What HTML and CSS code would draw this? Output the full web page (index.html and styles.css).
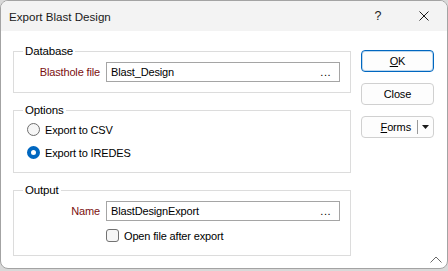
FILE: index.html
```html
<!DOCTYPE html>
<html>
<head>
<meta charset="utf-8">
<link rel="stylesheet" href="styles.css">
</head>
<body>
<div class="window">
  <div class="titlebar">
    <span class="title">Export Blast Design</span>
    <span class="tb-btn help">?</span>
    <span class="tb-btn close">
      <svg width="10" height="10" viewBox="0 0 10 10"><path d="M0.5 0.5 L9.5 9.5 M9.5 0.5 L0.5 9.5" stroke="#1a1a1a" stroke-width="1" fill="none"/></svg>
    </span>
  </div>
  <div class="content">
    <div class="left">
      <div class="group g-db">
        <div class="legend"><span>Database</span></div>
        <div class="row">
          <label class="lbl">Blasthole file</label>
          <div class="input"><span class="val">Blast_Design</span><span class="dots">...</span></div>
        </div>
      </div>
      <div class="group g-opt">
        <div class="legend"><span>Options</span></div>
        <div class="radio-row first"><span class="radio"></span><span>Export to CSV</span></div>
        <div class="radio-row"><span class="radio on"></span><span>Export to IREDES</span></div>
      </div>
      <div class="group g-out">
        <div class="legend"><span>Output</span></div>
        <div class="row">
          <label class="lbl">Name</label>
          <div class="input"><span class="val">BlastDesignExport</span><span class="dots">...</span></div>
        </div>
        <div class="check-row"><span class="check"></span><span>Open file after export</span></div>
      </div>
    </div>
    <div class="right">
      <div class="btn ok"><span><u>O</u>K</span></div>
      <div class="btn">Close</div>
      <div class="btn split"><span class="split-main"><u>F</u>orms</span><span class="split-sep"></span><span class="split-arrow"><svg width="7" height="4" viewBox="0 0 7 4"><path d="M0 0 H7 L3.5 4 Z" fill="#1a1a1a"/></svg></span></div>
    </div>
  </div>
  <svg class="grip" width="12" height="7" viewBox="0 0 12 7"><path d="M0.5 6.5 L6 1 L11.5 6.5" stroke="#6a6a6a" stroke-width="1" fill="none"/></svg>
</div>
</body>
</html>
```
FILE: styles.css
```css
* { box-sizing: border-box; }
html, body { margin: 0; padding: 0; }
body {
  width: 448px; height: 271px;
  background: #d9d9d9;
  font-family: "Liberation Sans", Arial, sans-serif;
  font-size: 11px;
  letter-spacing: -0.15px;
  color: #000;
  overflow: hidden;
}
.window {
  position: relative;
  width: 448px; height: 269px;
  border: 1px solid #a3a3a3;
  border-radius: 8px;
  background: #fff;
  overflow: hidden;
  display: flex; flex-direction: column;
}
.titlebar {
  height: 30px;
  background: #f3f3f3;
  display: flex; align-items: center;
  flex: none;
}
.title {
  flex: 1;
  padding-left: 8px;
  font-size: 11.6px;
  letter-spacing: 0;
  color: #1a1a1a;
}
.tb-btn {
  width: 46px; height: 30px;
  display: flex; align-items: center; justify-content: center;
  color: #1a1a1a;
}
.help { font-size: 12.5px; }
.content {
  display: flex;
  padding: 19px 0 0 12px;
  gap: 10px;
}
.left { width: 338px; display: flex; flex-direction: column; gap: 17px; margin-top: 1px; }
.group {
  border: 1px solid #dcdcdc;
}
.legend {
  height: 14px;
  margin-top: -8px;
  display: flex;
  padding-left: 9px;
}
.legend span {
  background: #fff;
  padding: 0 2px;
  line-height: 14px;
  height: 14px;
  font-size: 11.5px;
}
.g-db { height: 42px; }
.g-db .row { margin-top: 4px; }
.row { display: flex; align-items: center; height: 20px; }
.lbl {
  width: 86px;
  text-align: right;
  color: #7b1010;
  margin-right: 6px;
}
.input {
  width: 234px; height: 20px;
  border: 1px solid #a5a5a5;
  display: flex; align-items: center;
  padding: 0 8px 0 4px;
}
.val { flex: 1; }
.dots { letter-spacing: 0.5px; }
.g-opt { height: 63px; }
.radio-row { display: flex; align-items: center; height: 13px; padding-left: 13px; margin-bottom: 10px; }
.radio-row.first { margin-top: 6px; }
.radio {
  width: 13px; height: 13px;
  border: 1px solid #6e6e6e;
  border-radius: 50%;
  background: #f6f6f6;
  margin-right: 5px;
}
.radio.on {
  border: 4px solid #0067c0;
  background: #fff;
}
.g-out { height: 66px; }
.g-out .row { margin-top: 4px; }
.check-row { display: flex; align-items: center; height: 13px; margin-top: 8px; padding-left: 92px; }
.check {
  width: 13px; height: 13px;
  border: 1px solid #727272;
  border-radius: 3px;
  background: #f6f6f6;
  margin-right: 5px;
}
.right { display: flex; flex-direction: column; gap: 11px; }
.btn {
  width: 73px; height: 22px;
  border: 1px solid #d0d0d0;
  border-radius: 4px;
  background: #fdfdfd;
  display: flex; align-items: center; justify-content: center;
}
.btn.ok { border: 1px solid #0067c0; box-shadow: inset 0 0 0 1px rgba(0,103,192,0.25); }
.split { justify-content: flex-start; padding: 0; }
.split-main { flex: 1; text-align: right; padding-right: 6px; }
.split-sep { width: 1px; height: 14px; background: #9a9a9a; }
.split-arrow { width: 15px; display: flex; justify-content: center; align-items: center; }
.grip { position: absolute; right: 5px; bottom: 5px; }
u { text-decoration: underline; text-underline-offset: 1px; }
```
